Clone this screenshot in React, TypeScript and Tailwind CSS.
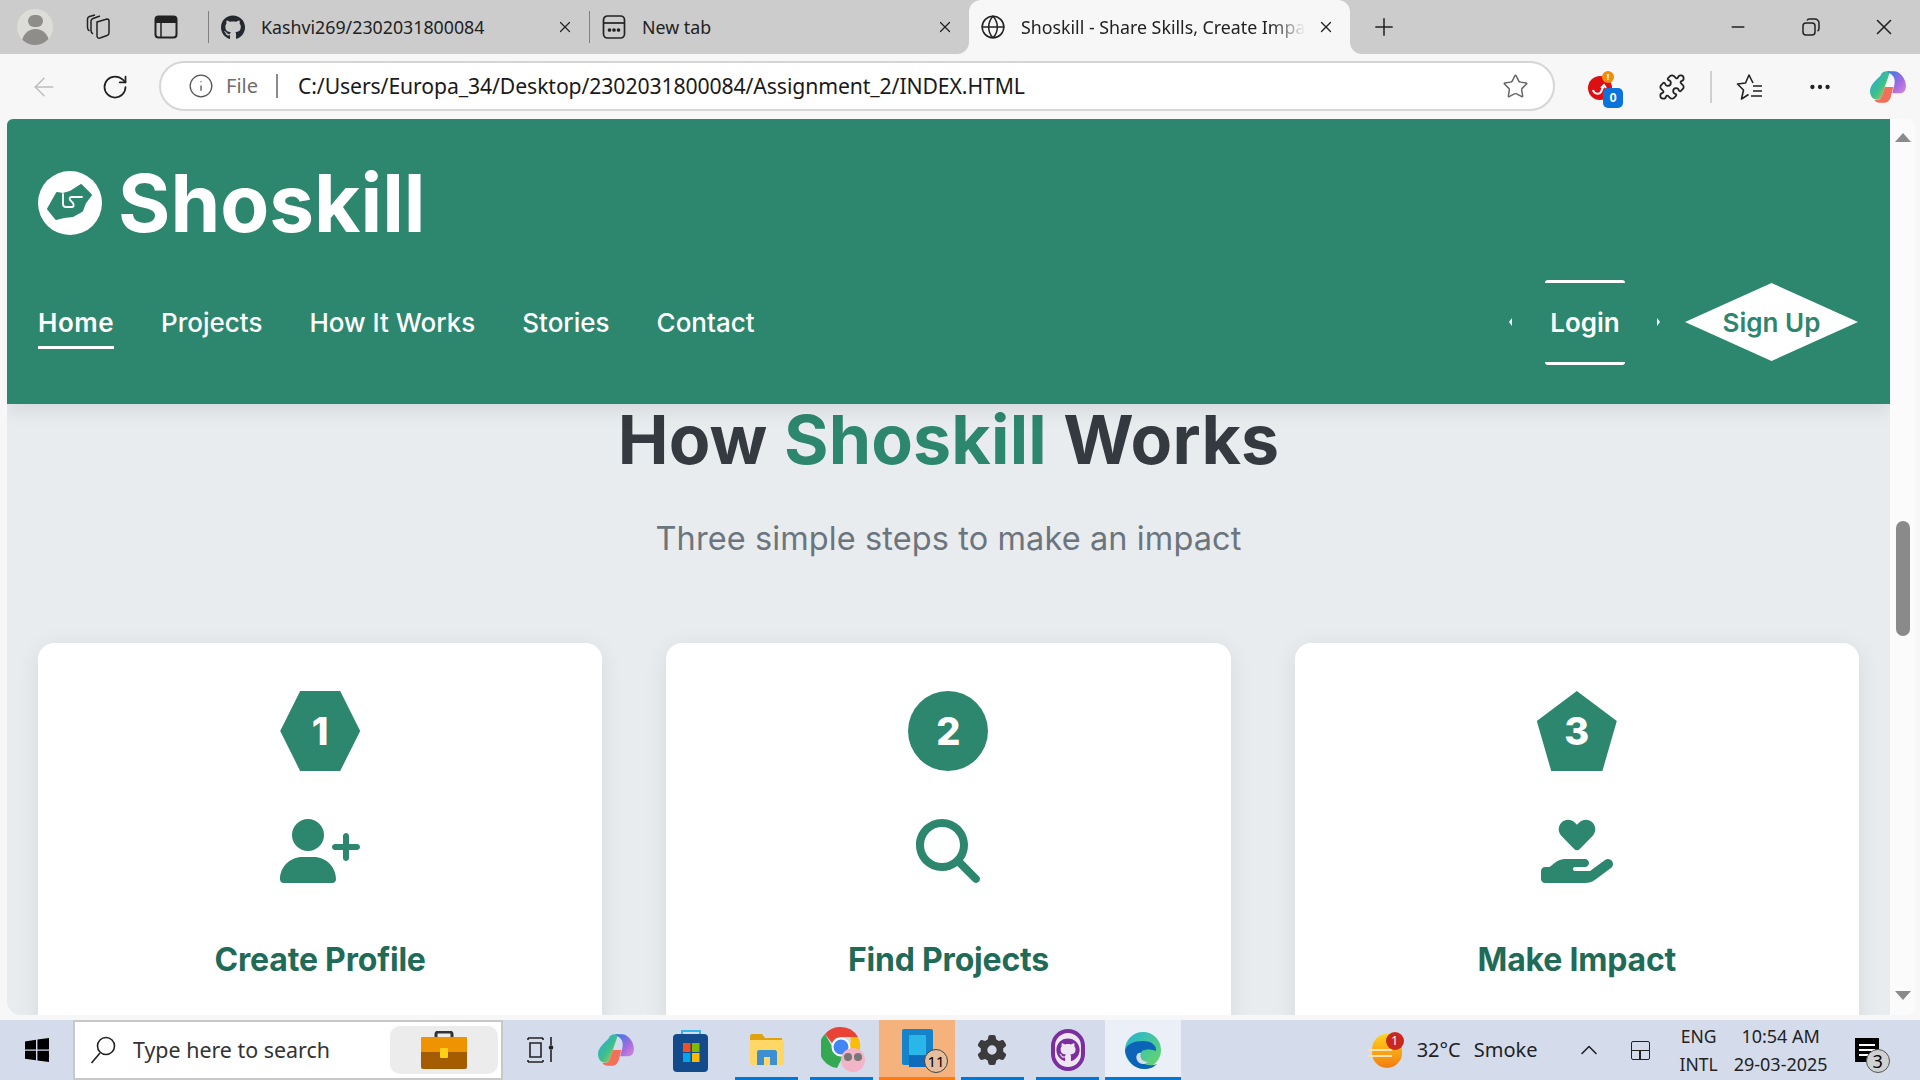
import { ReactNode } from "react";
import { ArrowLeft, ChevronUp, Globe, Info, Minus, MoreHorizontal, Plus, Puzzle, RotateCw, Star, X } from "lucide-react";
import { FaGithub, FaGear, FaHandHoldingHeart, FaMagnifyingGlass, FaUserPlus } from "react-icons/fa6";

const segoe = "font-['Noto_Sans',sans-serif]";

function CopilotLogo({ size, id }: { size: number; id: string }) {
  return (
    <svg width={size} height={size} viewBox="0 0 36 36">
      <defs>
        <linearGradient id={`${id}a`} x1="0" y1="0" x2="1" y2="1">
          <stop offset="0" stopColor="#1fa8e8" />
          <stop offset="0.55" stopColor="#3fc08a" />
          <stop offset="1" stopColor="#f4c531" />
        </linearGradient>
        <linearGradient id={`${id}b`} x1="0" y1="0" x2="1" y2="1">
          <stop offset="0" stopColor="#2a7be4" />
          <stop offset="0.6" stopColor="#a56be0" />
          <stop offset="1" stopColor="#d98bd8" />
        </linearGradient>
      </defs>
      <path d="M11 7c1-3 3-4 6-4h3L12 27c-1 2-2 3-4 3-4 0-7-3-7-8 0-6 5-10 10-15z" fill={`url(#${id}a)`} />
      <path d="M17 3h7c5 0 11 7 11 14 0 5-3 7-6 7h-7l2-8c1-4 0-8-3-10z" fill={`url(#${id}b)`} />
      <path d="M12 27l3-9h8l-2 8c-1 4-3 7-7 7h-3c-2 0-5-1-6-3 3 1 6 0 7-3z" fill="#f2705a" />
    </svg>
  );
}

function WindowsLogo() {
  return (
    <svg width="24" height="24" viewBox="0 0 24 24" fill="#000">
      <path d="M0 3.4 11 1.8v9.6H0zM12.4 1.6 24 0v11.4H12.4zM0 12.7h11v9.6L0 20.7zM12.4 12.7H24V24l-11.6-1.6z" />
    </svg>
  );
}

function Briefcase() {
  return (
    <svg width="46" height="38" viewBox="0 0 46 38">
      <path d="M15 7V3c0-1 1-2 2-2h12c1 0 2 1 2 2v4" fill="none" stroke="#333" strokeWidth="3" />
      <rect x="0" y="6" width="46" height="32" rx="2" fill="#a35c00" />
      <path d="M0 8c0-1 1-2 2-2h42c1 0 2 1 2 2v13H0z" fill="#ef9300" />
      <rect x="19" y="17" width="8" height="10" rx="1" fill="#fcd116" />
    </svg>
  );
}

function StoreIcon() {
  return (
    <svg width="36" height="44" viewBox="0 0 36 44">
      <path d="M9 8V3h18v5" fill="none" stroke="#35b4f0" strokeWidth="2" />
      <rect x="0" y="6" width="35" height="38" rx="4" fill="#124a8c" />
      <rect x="10" y="15" width="7.5" height="9" fill="#f25022" />
      <rect x="19" y="15" width="7.5" height="9" fill="#7fba00" />
      <rect x="10" y="25" width="7.5" height="9" fill="#00a4ef" />
      <rect x="19" y="25" width="7.5" height="9" fill="#ffb900" />
    </svg>
  );
}

function FilesIcon() {
  return (
    <svg width="34" height="34" viewBox="0 0 34 34">
      <path d="M0 3c0-1 1-2 2-2h10l3 4h17v6H0z" fill="#e0a30d" />
      <path d="M0 7h32c1 0 2 1 2 2v21c0 1-1 2-2 2H2c-1 0-2-1-2-2z" fill="#ffd766" />
      <path d="M7 32V19c0-1 1-2 2-2h16c1 0 2 1 2 2v13h-7v-8h-6v8z" fill="#3d8fd1" />
    </svg>
  );
}

function ChromeIcon() {
  return (
    <svg width="44" height="46" viewBox="0 0 44 46" className="ml-[3px]">
      <path d="M20 0a20 20 0 0 1 17 10H20a10 10 0 0 0-9 6L4 7a20 20 0 0 1 16-7z" fill="#ea4335" />
      <path d="M37 10a20 20 0 0 1-9 27l-8-13a10 10 0 0 0 9-14z" fill="#fbbc05" />
      <path d="M4 7l9 16a10 10 0 0 0 9 6l-6 12A20 20 0 0 1 4 7z" fill="#34a853" />
      <circle cx="20" cy="20" r="8.5" fill="#4285f4" stroke="#fff" strokeWidth="2" />
      <circle cx="32" cy="33" r="12" fill="#f4b4c8" />
      <circle cx="27" cy="30" r="4" fill="#777" />
      <circle cx="37" cy="30" r="4" fill="#777" />
    </svg>
  );
}

function DevIcon() {
  return (
    <div className="relative ml-[2px]">
      <svg width="32" height="42" viewBox="0 0 32 42">
        <rect x="0" y="0" width="31" height="36" rx="2" fill="#1583c9" />
        <rect x="7" y="6" width="17" height="32" rx="1" fill="#29b6e8" />
        <rect x="7" y="26" width="17" height="12" fill="#0f6cbd" />
      </svg>
      <div className={`absolute left-[22px] top-[20px] w-6 h-6 rounded-full bg-[#e3bfa0] border border-[#444] flex items-center justify-center text-[15px] leading-none text-black ${segoe}`}>11</div>
    </div>
  );
}

function EdgeIcon() {
  return (
    <svg width="37" height="37" viewBox="0 0 37 37">
      <defs>
        <linearGradient id="edgeTop" x1="0" y1="0" x2="1" y2="1">
          <stop offset="0" stopColor="#1fb5d8" />
          <stop offset="1" stopColor="#6ed860" />
        </linearGradient>
      </defs>
      <circle cx="18" cy="18" r="18" fill="url(#edgeTop)" />
      <path d="M0 19C2 29 9 37 19 37c6 0 10-2 13-5-5 2-12 2-15-2-3-3-3-8 0-11 3-2 9-2 14 0 1-5-4-10-13-10C9 9 1 12 0 19z" fill="#0c64b8" />
      <path d="M16 21c-2 5 2 9 7 9-3 3-9 3-11-2-2-4 1-8 4-7z" fill="#d4dcec" />
    </svg>
  );
}

function ExtensionBadge() {
  return (
    <div className="relative w-9 h-9">
      <div className="absolute left-0 top-[7px] w-[24px] h-[24px] rounded-full bg-[#dc0f12]" />
      <svg className="absolute left-[3px] top-[12px]" width="16" height="16" viewBox="0 0 16 16" fill="none" stroke="#fff" strokeWidth="2">
        <path d="M2 9c1 4 6 5 8 2l3-7M10 7l3-3 2 3" />
      </svg>
      <div className="absolute left-[14px] top-[2px] w-[12px] h-[12px] rounded-full bg-[#f08c10] text-white text-[9px] leading-[12px] text-center font-bold">!</div>
      <div className="absolute left-[15px] top-[19px] w-[20px] h-[20px] rounded-[5px] bg-[#0a73dc] text-white text-[13px] leading-[20px] text-center font-bold font-['Liberation_Sans',sans-serif]">0</div>
    </div>
  );
}

function Tab({ icon, title, width }: { icon: ReactNode; title: string; width: string }) {
  return (
    <div className={`flex items-center shrink-0 h-full ${width}`}>
      <div className="w-[24px] h-8 flex items-center justify-center shrink-0 ml-3">{icon}</div>
      <span className={`ml-4 text-[17.8px] text-[#222] whitespace-nowrap ${segoe}`}>{title}</span>
      <X size={18} strokeWidth={1.6} className="shrink-0 mr-[15px] ml-auto text-[#222]" />
    </div>
  );
}

function TitleBar() {
  return (
    <div className="h-[54px] bg-[#cccccc] flex items-center shrink-0">
      <div className="w-[70px] flex justify-center">
        <div className="w-[36px] h-[36px] rounded-full bg-[#dcdcd8] overflow-hidden flex flex-col items-center">
          <div className="w-[15px] h-[15px] rounded-full bg-[#8f8d89] mt-[6px]" />
          <div className="w-[27px] h-[20px] rounded-t-full bg-[#8f8d89] mt-[2px]" />
        </div>
      </div>
      <div className="w-[58px] flex justify-center">
        <svg width="28" height="28" viewBox="0 0 28 28" fill="none" stroke="#222" strokeWidth="1.5">
          <path d="M12 9l10-3c1 0 2 .5 2 2v12c0 1-.5 2-2 2.500l-7 2.500c-2 .5-3-.5-3-2z" />
          <path d="M8 21c-1.500-1-2-2-2-3.500V8c0-1 .5-2 2-2.500L15 3" />
          <path d="M4.500 18C3 17 2.500 16 2.500 14.500V6c0-1 .5-2 2-2.500L10 2" />
        </svg>
      </div>
      <div className="w-[76px] flex justify-center">
        <svg width="24" height="24" viewBox="0 0 24 24">
          <rect x="1.500" y="1.500" width="21" height="21" rx="3" fill="none" stroke="#222" strokeWidth="2" />
          <path d="M2 4c0-1 1-2 2-2h16c1 0 2 1 2 2v4H2z" fill="#222" />
          <path d="M7 8v14" stroke="#222" strokeWidth="1.500" />
        </svg>
      </div>
      <div className="w-px h-8 bg-[#808080] ml-[4px]" />
      <Tab icon={<FaGithub size={27} color="#24292f" />} title="Kashvi269/2302031800084" width="w-[380px]" />
      <div className="w-px h-8 bg-[#808080]" />
      <Tab
        icon={
          <svg width="24" height="26" viewBox="0 0 24 26" fill="none" stroke="#222" strokeWidth="1.7">
            <rect x="1.500" y="2" width="21" height="22" rx="4" />
            <path d="M2 9h20" />
            <circle cx="7.500" cy="16" r="1" fill="#222" />
            <circle cx="12" cy="16" r="1" fill="#222" />
            <circle cx="16.500" cy="16" r="1" fill="#222" />
          </svg>
        }
        title="New tab"
        width="w-[379px]"
      />
      <div className="relative w-[381px] h-[54px] bg-[#f7f7f7] rounded-t-[12px] flex items-center shrink-0">
        <div className="absolute -left-[12px] bottom-0 w-3 h-3 bg-[#f7f7f7]">
          <div className="w-3 h-3 bg-[#cccccc] rounded-br-[12px]" />
        </div>
        <div className="absolute -right-[12px] bottom-0 w-3 h-3 bg-[#f7f7f7]">
          <div className="w-3 h-3 bg-[#cccccc] rounded-bl-[12px]" />
        </div>
        <Globe size={26} strokeWidth={1.4} className="ml-[11px] text-[#222] shrink-0" />
        <span className={`ml-[15px] text-[17.8px] text-[#222] whitespace-nowrap w-[284px] overflow-hidden [mask-image:linear-gradient(to_right,black_88%,transparent)] ${segoe}`}>Shoskill - Share Skills, Create Impact</span>
        <X size={18} strokeWidth={1.8} className="ml-auto mr-[15px] text-[#222] shrink-0" />
      </div>
      <Plus size={28} strokeWidth={1.3} className="ml-[20px] text-[#222]" />
      <div className="ml-auto flex items-center h-full">
        <div className="w-[73px] flex justify-center"><Minus size={20} strokeWidth={1.8} className="text-[#222]" /></div>
        <div className="w-[74px] flex justify-center">
          <svg width="18" height="18" viewBox="0 0 18 18" fill="none" stroke="#222" strokeWidth="1.5">
            <rect x="1" y="5" width="12" height="12" rx="3" />
            <path d="M5 2.500C5.500 1.500 6.500 1 7.500 1H13c2 0 4 2 4 4v5.500c0 1-.5 2-1.500 2.500" />
          </svg>
        </div>
        <div className="w-[72px] flex justify-center"><X size={26} strokeWidth={1.5} className="text-[#222]" /></div>
      </div>
    </div>
  );
}

function FavoritesIcon() {
  return (
    <svg width="28" height="28" viewBox="0 0 28 28" fill="none" stroke="#222" strokeWidth="1.6" strokeLinejoin="round">
      <path d="M17 10 13 2 9.500 10 1.500 11l6 6-2 9 7-4.500" />
      <path d="M17 13h9M17 18h9M15 23h11" />
    </svg>
  );
}

function Toolbar() {
  return (
    <div className="h-[65px] bg-[#f7f7f7] flex items-center shrink-0">
      <div className="w-[159px] flex items-center shrink-0">
        <ArrowLeft size={30} strokeWidth={1.2} className="ml-[29px] text-[#bdbdbd]" />
        <RotateCw size={28} strokeWidth={1.5} className="ml-[42px] text-[#222]" />
      </div>
      <div className="w-[1396px] h-[50px] bg-white rounded-full border-2 border-[#d6d6d6] flex items-center shrink-0 mb-[1px]">
        <Info size={26} strokeWidth={1.2} className="ml-[27px] text-[#555]" />
        <span className={`ml-[12px] text-[20px] text-[#6e6e6e] ${segoe}`}>File</span>
        <div className="w-[2px] h-6 bg-[#8a8a8a] ml-[18px]" />
        <span className={`ml-[20px] text-[21.2px] text-[#1a1a1a] whitespace-nowrap tracking-[-0.1px] ${segoe}`}>C:/Users/Europa_34/Desktop/2302031800084/Assignment_2/INDEX.HTML</span>
        <Star size={27} strokeWidth={1.3} className="ml-auto mr-[24px] text-[#666]" />
      </div>
      <div className="flex items-center flex-1">
        <div className="w-[33px]" />
        <ExtensionBadge />
        <Puzzle size={28} strokeWidth={1.5} className="ml-[34px] text-[#222]" />
        <div className="w-[2px] h-8 bg-[#cfcfcf] ml-[24px]" />
        <div className="ml-[24px]"><FavoritesIcon /></div>
        <MoreHorizontal size={26} strokeWidth={2} className="ml-[43px] text-[#222]" />
        <div className="ml-[36px]"><CopilotLogo size={38} id="bar" /></div>
      </div>
    </div>
  );
}

const navLinks = ["Home", "Projects", "How It Works", "Stories", "Contact"];

function SiteHeader() {
  return (
    <header className="bg-[#2d866e] h-[285px] shrink-0 pl-[31px] pr-[32px] relative z-10 shadow-[0_4px_20px_rgba(0,0,0,0.1)] font-['Inter',sans-serif] text-white">
      <div className="flex items-center pt-[52px]">
        <div className="w-[64px] h-[64px] rounded-full bg-white flex items-center justify-center">
          <svg width="64" height="64" viewBox="0 0 64 64">
            <path d="M10 38 19 22l6 1 7-2 11-7 10 10-6 8-3 8-9 5-9 1-8 2z" fill="#2d866e" stroke="#2d866e" strokeWidth="2" strokeLinejoin="round" />
            <path d="M25 23v10c0 2 1 3 3 3h6c2 0 2-2 1-4l-3-3c-1-2 0-3 2-3h10" fill="none" stroke="#fff" strokeWidth="1.8" strokeLinecap="round" />
          </svg>
        </div>
        <span className="ml-[16px] text-[80px] leading-[64px] font-bold">Shoskill</span>
      </div>
      <div className="flex items-center justify-between mt-[44px] h-[86px]">
        <nav className="flex items-center gap-[47px] text-[26px] font-medium">
          {navLinks.map((link, index) => (
            <a key={link} className={index === 0 ? "font-semibold tracking-[0.5px] border-b-[3px] border-white pb-[4px] pt-2" : "pb-[4px] pt-2 border-b-[3px] border-transparent"}>{link}</a>
          ))}
        </nav>
        <div className="flex items-center">
          <div className="w-[3px] h-[8px] bg-white [clip-path:polygon(100%_0,100%_100%,0_50%)] mr-[33px]" />
          <a className="w-[80px] h-[85px] border-y-[3px] border-white rounded-[3px] flex items-center justify-center text-[26px] font-semibold">Login</a>
          <div className="w-[3px] h-[8px] bg-white [clip-path:polygon(0_0,100%_50%,0_100%)] ml-[32px]" />
          <a className="ml-[25px] w-[173px] h-[78px] bg-white text-[#2d866e] [clip-path:polygon(50%_0,100%_50%,50%_100%,0_50%)] flex items-center justify-center text-[26px] font-semibold">Sign Up</a>
        </div>
      </div>
    </header>
  );
}

const steps = [
  { number: "1", title: "Create Profile", shape: "[clip-path:polygon(25%_0,75%_0,100%_50%,75%_100%,25%_100%,0_50%)]", icon: <FaUserPlus size={80} /> },
  { number: "2", title: "Find Projects", shape: "rounded-full", icon: <FaMagnifyingGlass size={64} /> },
  { number: "3", title: "Make Impact", shape: "[clip-path:polygon(50%_0,100%_37.5%,82%_100%,18%_100%,0_37.5%)]", icon: <FaHandHoldingHeart size={72} /> },
];

function StepCard({ number, title, shape, icon }: { number: string; title: string; shape: string; icon: ReactNode }) {
  return (
    <div className="bg-white rounded-[16px] shadow-[0_5px_25px_rgba(0,0,0,0.08)] h-[420px] flex flex-col items-center pt-[48px]">
      <div className={`w-[80px] h-[80px] bg-[#2d866e] text-white flex items-center justify-center text-[38px] font-extrabold ${shape}`}>{number}</div>
      <div className="h-[64px] mt-[48px] flex items-center text-[#2d866e]">{icon}</div>
      <h3 className="mt-[57px] text-[32px] leading-[40px] font-bold text-[#1f6b57] tracking-[-0.2px]">{title}</h3>
    </div>
  );
}

function Page() {
  return (
    <div className="flex-1 min-w-0 bg-[#e9ecef] flex flex-col overflow-hidden rounded-bl-[14px] rounded-tl-[6px]">
      <SiteHeader />
      <main className="px-[31px] font-['Inter',sans-serif]">
        <h2 className="text-center text-[68px] leading-[72px] font-bold text-[#343a40] tracking-[0.2px] -mt-[1px]">
          How <span className="text-[#2d866e]">Shoskill</span> Works
        </h2>
        <p className="text-center text-[32.5px] leading-[48px] text-[#6c757d] tracking-[0.1px] mt-[40px] mb-[80px]">Three simple steps to make an impact</p>
        <div className="grid grid-cols-3 gap-[64px]">
          {steps.map((step) => (
            <StepCard key={step.number} {...step} />
          ))}
        </div>
      </main>
    </div>
  );
}

function Scrollbar() {
  return (
    <div className="w-[25px] bg-[#fbfbfb] flex flex-col items-center rounded-r-[8px] shrink-0">
      <div className="mt-[14px] w-0 h-0 border-x-[8px] border-x-transparent border-b-[9px] border-b-[#8a8a8a]" />
      <div className="mt-[379px] w-[14px] h-[115px] rounded-full bg-[#8a8a8a]" />
      <div className="mt-auto mb-[15px] w-0 h-0 border-x-[8px] border-x-transparent border-t-[9px] border-t-[#8a8a8a]" />
    </div>
  );
}

function TaskSlot({ children, underline, bg }: { children?: ReactNode; underline?: string; bg?: string }) {
  return (
    <div className={`relative w-[75.3px] h-full flex items-center justify-center shrink-0 ${bg ?? ""}`}>
      {children}
      {underline && <div className={`absolute bottom-0 left-[6px] right-[6px] h-[3px] ${underline}`} />}
    </div>
  );
}

function Taskbar() {
  return (
    <div className={`h-[60px] bg-[#d4dcec] flex items-center shrink-0 ${segoe}`}>
      <div className="w-[73px] flex justify-center shrink-0"><WindowsLogo /></div>
      <div className="w-[430px] h-[60px] bg-white border-2 border-[#c8c8c8] flex items-center shrink-0">
        <svg className="ml-[15px]" width="26" height="28" viewBox="0 0 26 28" fill="none" stroke="#222" strokeWidth="1.6">
          <ellipse cx="16" cy="10" rx="8.500" ry="8.500" />
          <path d="M10 17 1.500 27" />
        </svg>
        <span className="ml-[17px] text-[21.4px] text-[#333] whitespace-nowrap">Type here to search</span>
        <div className="ml-auto mr-[3px] w-[108px] h-[48px] rounded-[10px] bg-[#ececec] flex items-center justify-center"><Briefcase /></div>
      </div>
      <TaskSlot>
        <svg width="28" height="30" viewBox="0 0 28 30" fill="none" stroke="#222" strokeWidth="1.6">
          <path d="M1 3h15M1 27h15M3 8h11v14H3zM1 3v2M16 3v2M1 25v2M16 25v2M24 2v8M24 15v12" />
          <circle cx="24" cy="12.500" r="1.500" fill="#222" />
        </svg>
      </TaskSlot>
      <TaskSlot><CopilotLogo size={38} id="task" /></TaskSlot>
      <TaskSlot><StoreIcon /></TaskSlot>
      <TaskSlot underline="bg-[#0078d4]"><FilesIcon /></TaskSlot>
      <TaskSlot underline="bg-[#0078d4]"><ChromeIcon /></TaskSlot>
      <TaskSlot bg="bg-[#f6b27c]" underline="bg-[#ff7a10] !left-0 !right-0"><DevIcon /></TaskSlot>
      <TaskSlot underline="bg-[#0078d4]"><FaGear size={30} color="#3b3b3b" /></TaskSlot>
      <TaskSlot underline="bg-[#0078d4]">
        <div className="w-[34px] h-[42px] rounded-full bg-[#7b2f9e] flex items-center justify-center">
          <div className="w-[26px] h-[34px] rounded-full bg-[#efe6f3] flex items-center justify-center"><FaGithub size={24} color="#7b2f9e" /></div>
        </div>
      </TaskSlot>
      <TaskSlot bg="bg-[#ebeff8]" underline="bg-[#0078d4] !left-0 !right-0"><EdgeIcon /></TaskSlot>
      <div className="ml-[187px] flex items-center shrink-0">
        <div className="relative w-[36px] h-[36px]">
          <div className="absolute left-[4px] top-[2px] w-[30px] h-[34px] rounded-full bg-gradient-to-b from-[#ffd11a] to-[#f07c12]" />
          <div className="absolute left-0 top-[17px] w-[24px] h-[2px] bg-[#f4e3b0]" />
          <div className="absolute left-0 top-[23px] w-[24px] h-[2px] bg-[#f4e3b0]" />
          <div className="absolute left-[18px] top-0 w-[18px] h-[18px] rounded-full bg-[#c9281e] text-white text-[12px] leading-[18px] text-center">1</div>
        </div>
        <span className="ml-[13px] text-[20px] text-[#222]">32°C</span>
        <span className="ml-[13px] text-[20px] text-[#222]">Smoke</span>
      </div>
      <ChevronUp size={28} strokeWidth={1.4} className="ml-[37px] text-[#222]" />
      <div className="ml-[28px] w-[19px] h-[19px] border-[1.5px] border-[#222] rounded-[2px] flex flex-col justify-end">
        <div className="h-[9px] border-t-[1.5px] border-[#222] flex justify-center"><div className="w-[1.5px] bg-[#222]" /></div>
      </div>
      <div className="ml-[30px] flex flex-col items-center text-[17.5px] leading-[28px] text-[#222]">
        <span>ENG</span>
        <span>INTL</span>
      </div>
      <div className="ml-[15px] w-[96px] flex flex-col items-center text-[18px] leading-[28px] text-[#222] whitespace-nowrap">
        <span>10:54 AM</span>
        <span>29-03-2025</span>
      </div>
      <div className="relative ml-[26px] w-[24px] h-[24px] bg-black">
        <div className="mt-[6px] mx-[4px] h-[2px] bg-white" />
        <div className="mt-[3px] mx-[4px] h-[2px] bg-white" />
        <div className="mt-[3px] ml-[4px] mr-[9px] h-[2px] bg-white" />
        <div className="absolute left-[11px] top-[11px] w-[24px] h-[24px] rounded-full bg-[#d0d0d0] border border-[#555] text-[18px] leading-[22px] text-center text-black">3</div>
      </div>
    </div>
  );
}

export default function App() {
  return (
    <div className="w-[1920px] h-[1080px] flex flex-col overflow-hidden bg-[#f7f7f7]">
      <TitleBar />
      <Toolbar />
      <div className="h-[901px] flex pl-[7px] pr-[5px] pb-[5px] shrink-0">
        <Page />
        <Scrollbar />
      </div>
      <Taskbar />
    </div>
  );
}
